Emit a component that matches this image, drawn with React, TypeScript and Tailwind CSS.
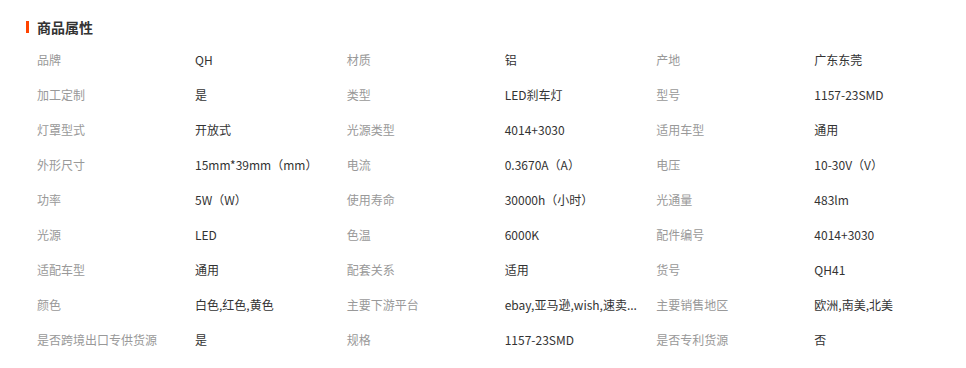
const rows: [string, string][][] = [
  [["品牌", "QH"], ["材质", "铝"], ["产地", "广东东莞"]],
  [["加工定制", "是"], ["类型", "LED刹车灯"], ["型号", "1157-23SMD"]],
  [["灯罩型式", "开放式"], ["光源类型", "4014+3030"], ["适用车型", "通用"]],
  [["外形尺寸", "15mm*39mm（mm）"], ["电流", "0.3670A（A）"], ["电压", "10-30V（V）"]],
  [["功率", "5W（W）"], ["使用寿命", "30000h（小时）"], ["光通量", "483lm"]],
  [["光源", "LED"], ["色温", "6000K"], ["配件编号", "4014+3030"]],
  [["适配车型", "通用"], ["配套关系", "适用"], ["货号", "QH41"]],
  [["颜色", "白色,红色,黄色"], ["主要下游平台", "ebay,亚马逊,wish,速卖..."], ["主要销售地区", "欧洲,南美,北美"]],
  [["是否跨境出口专供货源", "是"], ["规格", "1157-23SMD"], ["是否专利货源", "否"]],
];

export default function App() {
  return (
    <div
      className="h-[368px] w-[966px] bg-white pl-[26px] pt-[19px]"
      style={{ fontFamily: '"Noto Sans CJK SC", "Liberation Sans", sans-serif' }}
    >
      <div className="flex items-center gap-2">
        <span className="h-[12px] w-[3px] bg-[#ff4400]" />
        <h2 className="text-[14px] font-bold leading-[16px] text-[#333]">商品属性</h2>
      </div>

      <div className="mt-[7px] pl-[11px]">
        {rows.map((row, i) => (
          <div key={i} className="flex h-[35px] items-center text-[12px]">
            {row.map(([label, value]) => (
              <div key={label} className="flex w-[310px]">
                <span className="w-[158px] shrink-0 text-[#999]">{label}</span>
                <span className="w-[140px] whitespace-nowrap text-[#333]">{value}</span>
              </div>
            ))}
          </div>
        ))}
      </div>
    </div>
  );
}
